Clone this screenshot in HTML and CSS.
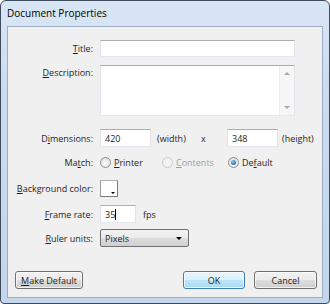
FILE: index.html
```html
<!DOCTYPE html>
<html lang="en">
<head>
    <meta charset="UTF-8">
    <title>Document Properties</title>
    <link rel="stylesheet" href="styles.css">
</head>
<body>
    <div class="window">
        <div class="titlebar">Document Properties</div>
        <div class="client">
            <div class="row row-title">
                <span class="label"><u>T</u>itle:</span>
                <div class="edit edit-wide"></div>
            </div>

            <div class="row row-desc">
                <span class="label label-top"><u>D</u>escription:</span>
                <div class="edit memo">
                    <div class="scrollbar">
                        <span class="arrow arrow-up"></span>
                        <span class="arrow arrow-down"></span>
                    </div>
                </div>
            </div>

            <div class="row row-dims">
                <span class="label">D<u>i</u>mensions:</span>
                <div class="edit edit-num">420</div>
                <span class="unit-width">(width)</span>
                <span class="times">x</span>
                <div class="edit edit-num">348</div>
                <span class="unit-height">(height)</span>
            </div>

            <div class="row row-match">
                <span class="label">Ma<u>t</u>ch:</span>
                <span class="option option-printer"><span class="radio"></span><u>P</u>rinter</span>
                <span class="option option-contents disabled"><span class="radio"></span><u>C</u>ontents</span>
                <span class="option"><span class="radio checked"></span>De<u>f</u>ault</span>
            </div>

            <div class="row row-bg">
                <span class="label"><u>B</u>ackground color:</span>
                <div class="swatch"></div>
            </div>

            <div class="row row-frame">
                <span class="label"><u>F</u>rame rate:</span>
                <div class="edit edit-rate">35<span class="caret"></span></div>
                <span class="unit-fps">fps</span>
            </div>

            <div class="row row-ruler">
                <span class="label"><u>R</u>uler units:</span>
                <div class="combo">Pixels<span class="combo-arrow"></span></div>
            </div>

            <div class="buttons">
                <button class="btn btn-make"><u>M</u>ake Default</button>
                <span class="spacer"></span>
                <button class="btn btn-default">OK</button>
                <button class="btn">Cancel</button>
            </div>
        </div>
    </div>
</body>
</html>
```

FILE: styles.css
```css
:root {
    --face: #f0f0f0;
    --text: #1e1e1e;
    --disabled: #a0a0a0;
    --frame-top: #d9e6f4;
    --frame-bottom: #c3d6ec;
}
* {
    box-sizing: border-box;
}
body {
    margin: 0;
    font-family: "Segoe UI", "Open Sans", "Noto Sans", sans-serif;
    font-size: 9px;
    color: var(--text);
    background: #ffffff;
}
u {
    text-decoration: underline;
    text-underline-offset: 1px;
}
.window {
    width: 330px;
    height: 304px;
    border: 1px solid #3d4b5c;
    border-radius: 6px 6px 4px 4px;
    background: linear-gradient(180deg, var(--frame-top) 0%, #cbdcef 30%, var(--frame-bottom) 100%);
    padding: 0 6px 5px 6px;
    display: flex;
    flex-direction: column;
}
.titlebar {
    height: 25px;
    line-height: 25px;
    font-size: 10px;
    color: #000000;
}
.client {
    flex: 1;
    background: var(--face);
    border: 1px solid #9aadc3;
    padding-top: 13px;
    display: flex;
    flex-direction: column;
}
.row {
    display: flex;
    align-items: center;
}
.label {
    width: 85px;
    margin-right: 7px;
    text-align: right;
    white-space: nowrap;
}
.label-top {
    align-self: flex-start;
    padding-top: 1px;
}
.row-title { height: 17px; }
.row-desc { height: 51px; margin-top: 8px; }
.row-dims { height: 18px; margin-top: 13px; }
.row-match { height: 16px; margin-top: 7px; }
.row-bg { height: 17px; margin-top: 10px; }
.row-frame { height: 18px; margin-top: 8px; }
.row-ruler { height: 18px; margin-top: 6px; }

.edit {
    height: 100%;
    background: #ffffff;
    border: 1px solid #e2e3ea;
    border-top-color: #abadb3;
    border-bottom-color: #e3e9ef;
    padding-left: 4px;
    display: flex;
    align-items: center;
}
.edit-wide {
    width: 195px;
}
.memo {
    width: 195px;
    justify-content: flex-end;
    padding: 0;
}
.scrollbar {
    width: 15px;
    height: 100%;
    background: #f7f7f7;
    border-left: 1px solid #ededed;
    display: flex;
    flex-direction: column;
    justify-content: space-between;
    align-items: center;
    padding: 6px 0 6px;
}
.arrow {
    width: 0;
    height: 0;
    border-left: 3px solid transparent;
    border-right: 3px solid transparent;
}
.arrow-up {
    border-bottom: 3px solid #a8a8a8;
}
.arrow-down {
    border-top: 3px solid #a8a8a8;
}
.edit-num {
    width: 51px;
}
.unit-width {
    width: 50px;
    padding-left: 6px;
}
.times {
    width: 26px;
}
.unit-height {
    padding-left: 4px;
}
.unit-fps {
    padding-left: 7px;
}
.edit-rate {
    width: 36px;
}
.caret {
    width: 1px;
    height: 11px;
    background: #000000;
}

.option {
    display: flex;
    align-items: center;
    white-space: nowrap;
}
.option-printer { width: 62px; }
.option-contents { width: 66px; }
.disabled {
    color: var(--disabled);
}
.radio {
    width: 11px;
    height: 11px;
    border-radius: 50%;
    border: 1px solid #8e8f8f;
    background: radial-gradient(circle at 50% 60%, #ffffff 0%, #e4e4e4 70%, #d4d4d4 100%);
    margin-right: 3px;
    display: flex;
    align-items: center;
    justify-content: center;
}
.disabled .radio {
    border-color: #c8c8c8;
    background: #f2f2f2;
}
.checked::after {
    content: "";
    width: 5px;
    height: 5px;
    border-radius: 50%;
    background: radial-gradient(circle at 40% 35%, #8fd0f5 0%, #2a7bc0 60%, #0f4d8c 100%);
}

.swatch {
    width: 18px;
    height: 17px;
    border: 1px solid #7a7a7a;
    border-top-color: #b0b0b0;
    border-left-color: #9a9a9a;
    background: #ffffff;
    position: relative;
}
.swatch::after {
    content: "";
    position: absolute;
    right: 2px;
    bottom: 2px;
    border-left: 2px solid transparent;
    border-right: 2px solid transparent;
    border-top: 2px solid #000000;
}

.combo {
    width: 89px;
    height: 100%;
    border: 1px solid #707070;
    border-radius: 2px;
    background: linear-gradient(180deg, #f2f2f2 0%, #ebebeb 50%, #dddddd 51%, #cfcfcf 100%);
    display: flex;
    align-items: center;
    justify-content: space-between;
    padding: 0 6px 0 4px;
}
.combo-arrow {
    border-left: 3px solid transparent;
    border-right: 3px solid transparent;
    border-top: 3px solid #000000;
}

.buttons {
    display: flex;
    margin-top: 24px;
    height: 18px;
    padding: 0 5px 0 7px;
    gap: 9px;
}
.spacer {
    flex: 1;
}
.btn {
    font: inherit;
    color: var(--text);
    height: 18px;
    width: 63px;
    padding: 0;
    border: 1px solid #707070;
    border-radius: 3px;
    background: linear-gradient(180deg, #f2f2f2 0%, #ebebeb 50%, #dddddd 51%, #cfcfcf 100%);
    box-shadow: inset 0 0 0 1px rgba(255, 255, 255, 0.7);
}
.btn-make {
    width: 68px;
}
.btn-default {
    width: 62px;
    border-color: #3c7fb1;
    background: linear-gradient(180deg, #eaf6fd 0%, #d9f0fc 50%, #bee6fd 51%, #a7d9f5 100%);
    box-shadow: inset 0 0 0 1px rgba(255, 255, 255, 0.8);
}
```
